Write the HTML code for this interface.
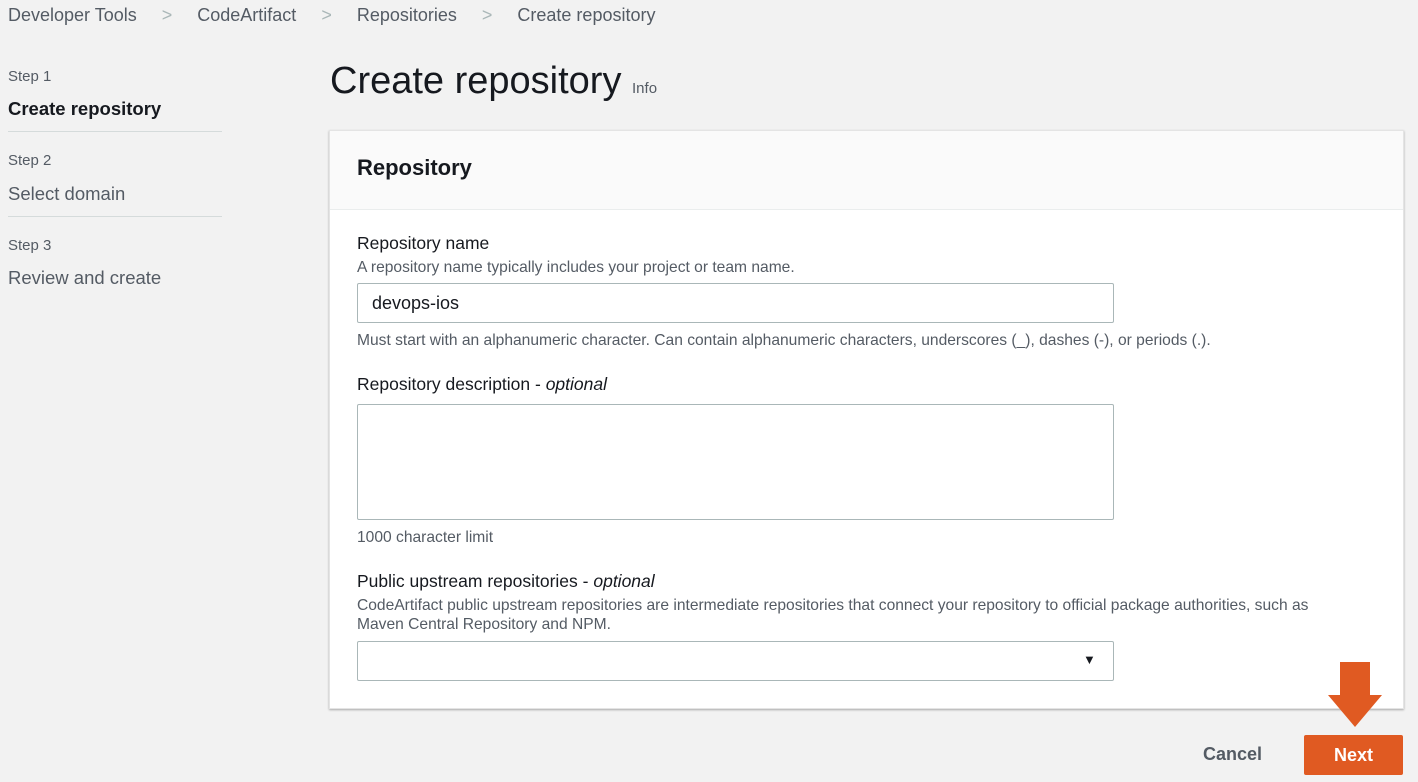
<!DOCTYPE html>
<html><head><style>
body{margin:0;width:1418px;height:782px;background:#f2f2f2;font-family:"Liberation Sans",sans-serif;color:#16191f;position:relative;overflow:hidden}
.a{position:absolute;white-space:nowrap}
.g{color:#545b64}
.s{font-size:15.6px}
.inp{position:absolute;background:#fff;border:1px solid #aab7b8;border-radius:2px;box-sizing:border-box}
</style></head><body>
<div class="a g" style="left:8px;top:5px;font-size:18px">Developer Tools <span style="color:#aab7b8;margin:0 20px">&gt;</span> CodeArtifact <span style="color:#aab7b8;margin:0 20px">&gt;</span> Repositories <span style="color:#aab7b8;margin:0 20px">&gt;</span> Create repository</div>
<div class="a g" style="left:8px;top:68px;font-size:15px">Step 1</div>
<div class="a" style="left:8px;top:98px;font-size:18.5px;font-weight:bold">Create repository</div>
<div class="a" style="left:8px;top:131px;width:214px;border-top:1px solid #d5dbdb"></div>
<div class="a g" style="left:8px;top:152px;font-size:15px">Step 2</div>
<div class="a g" style="left:8px;top:183px;font-size:18.5px">Select domain</div>
<div class="a" style="left:8px;top:216px;width:214px;border-top:1px solid #d5dbdb"></div>
<div class="a g" style="left:8px;top:237px;font-size:15px">Step 3</div>
<div class="a g" style="left:8px;top:267px;font-size:18.5px">Review and create</div>
<div class="a" style="left:330px;top:60px;font-size:38px">Create repository <span style="font-size:15px;color:#545b64">Info</span></div>
<div class="a" style="left:329px;top:130px;width:1075px;height:579px;background:#fff;box-shadow:0 1px 2px rgba(0,0,0,.3);border:1px solid #e4e4e4;box-sizing:border-box">
<div style="height:78px;background:#fafafa;border-bottom:1px solid #eaeded"></div></div>
<div class="a" style="left:357px;top:155px;font-size:22px;font-weight:bold">Repository</div>
<div class="a" style="left:357px;top:233px;font-size:17.5px">Repository name</div>
<div class="a g s" style="left:357px;top:259px">A repository name typically includes your project or team name.</div>
<div class="inp" style="left:357px;top:283px;width:757px;height:40px"></div>
<div class="a" style="left:372px;top:293px;font-size:18px">devops-ios</div>
<div class="a g s" style="left:357px;top:332px">Must start with an alphanumeric character. Can contain alphanumeric characters, underscores (_), dashes (-), or periods (.).</div>
<div class="a" style="left:357px;top:374px;font-size:17.5px">Repository description - <i>optional</i></div>
<div class="inp" style="left:357px;top:404px;width:757px;height:116px"></div>
<div class="a g s" style="left:357px;top:529px">1000 character limit</div>
<div class="a" style="left:357px;top:571px;font-size:17.5px">Public upstream repositories - <i>optional</i></div>
<div class="a g s" style="left:357px;top:597px">CodeArtifact public upstream repositories are intermediate repositories that connect your repository to official package authorities, such as</div>
<div class="a g s" style="left:357px;top:616px">Maven Central Repository and NPM.</div>
<div class="inp" style="left:357px;top:641px;width:757px;height:40px"></div>
<div class="a" style="left:1083px;top:652px;font-size:13px">▼</div>
<div class="a" style="left:1203px;top:744px;font-size:18px;font-weight:bold;color:#545b64">Cancel</div>
<div class="a" style="left:1304px;top:735px;width:99px;height:40px;background:#e05a22;border-radius:2px;color:#fff;font-weight:bold;font-size:18px;text-align:center;line-height:40px">Next</div>
<svg class="a" style="left:1328px;top:660px" width="54" height="68"><path d="M12 2h30v33h12L27 67 0 35h12z" fill="#e05a22"/></svg>
</body></html>
